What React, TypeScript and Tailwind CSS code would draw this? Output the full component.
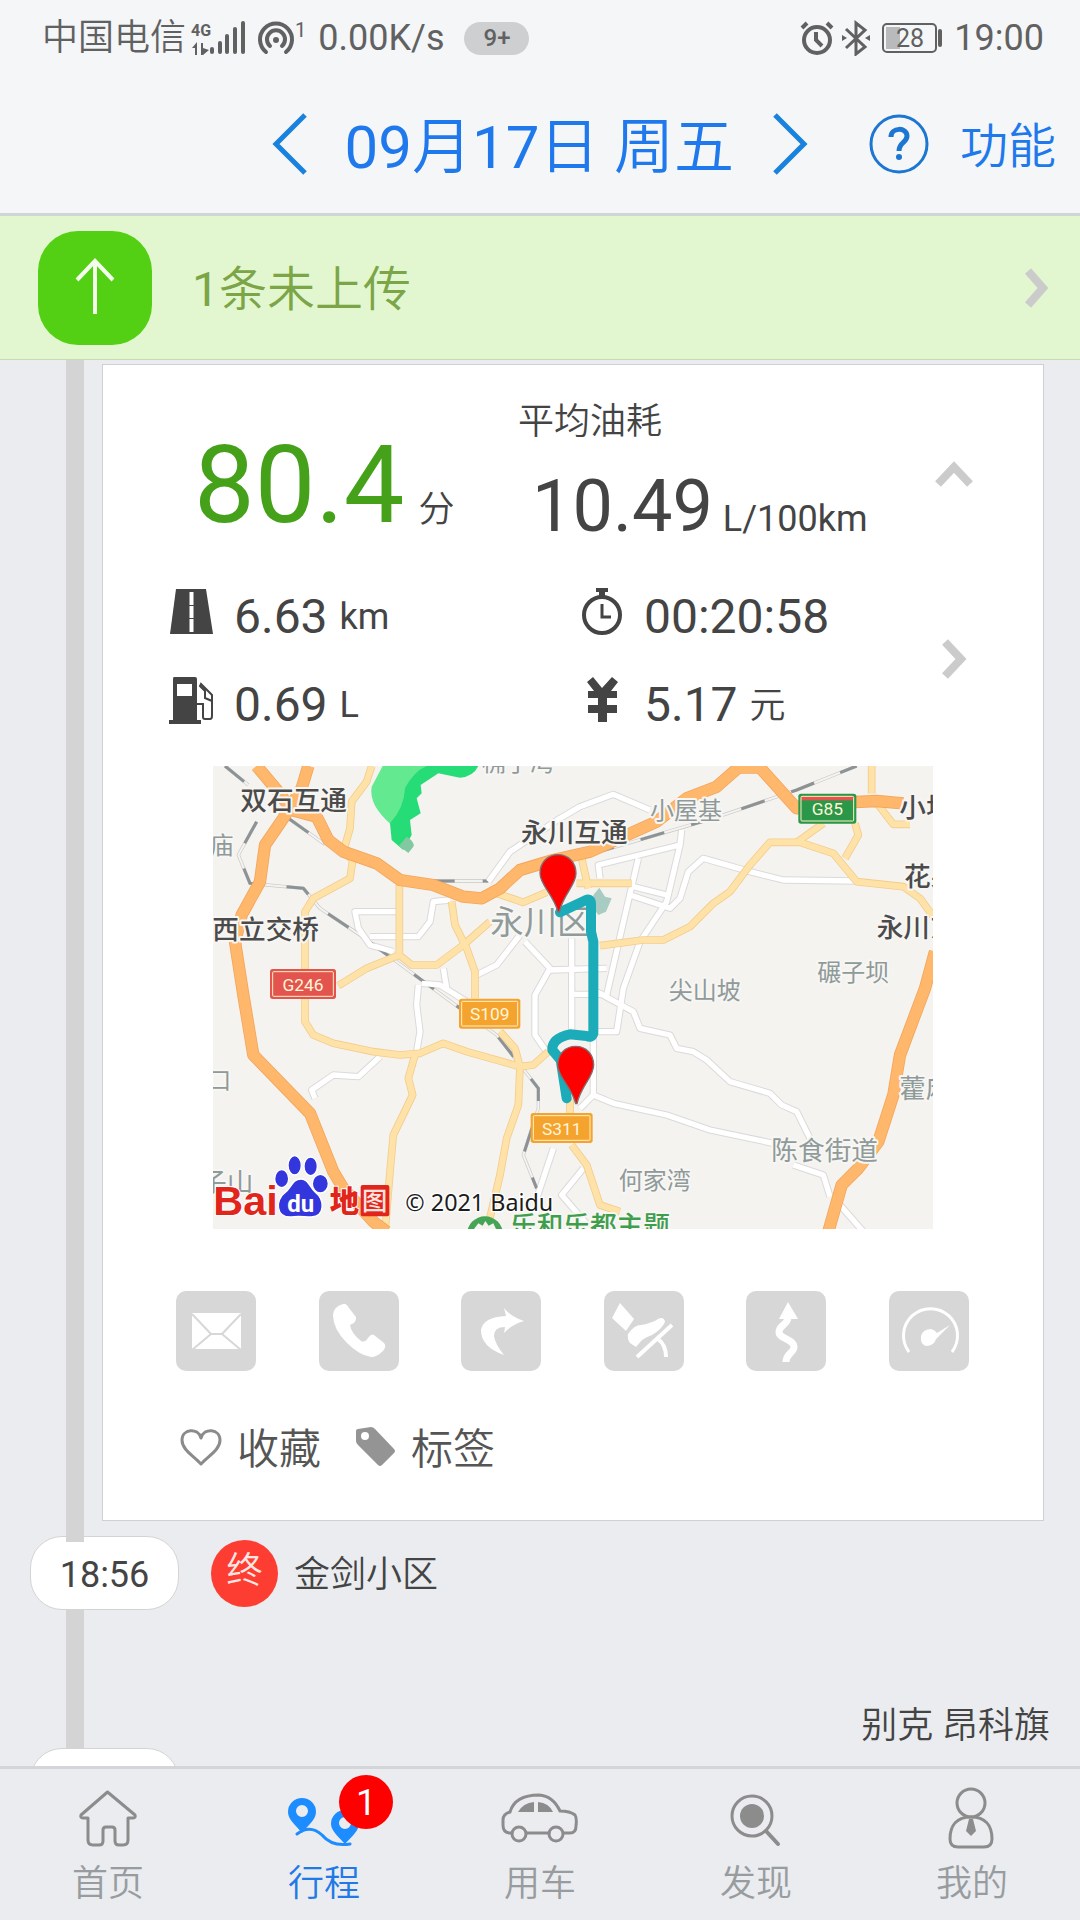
import React from 'react';

const FONT = "font-[Roboto,'Noto_Sans_CJK_SC',sans-serif]";

const ORANGE_ROADS = [
  'M170 33L235 110L275 165L350 185L385 255L430 290L530 325L600 375L700 390L790 425L845 430L900 400L960 345L1060 315L1170 290L1370 200L1460 130L1550 95L1615 38H1680L1790 160L1880 145L2030 138L2110 145',
  'M325 33L305 100L250 190L195 270L180 380L125 480L105 560L130 720L160 900L330 1075L400 1250L430 1300L520 1400L560 1430',
  'M2205 590L2175 700L2100 900L2080 1020L2035 1160L1975 1240L1925 1290L1885 1430',
];

const YELLOW_ROADS = [
  'M515 33L500 80L455 140L450 220L430 290L458 315L450 370L340 430L315 470V800L340 840L400 865L520 890L600 900L660 895L730 865L800 890L960 935L1000 930L1045 890',
  'M598 390V600L635 630H710L790 570L870 500',
  'M415 692L500 640L598 600',
  'M755 440L765 510L800 580L825 650V730',
  'M900 830L945 880L960 935L955 1050L920 1150L900 1260L860 1430',
  'M645 900L625 970L638 1020L580 1140L570 1250L555 1430',
  'M890 415L970 442L1040 412',
  'M1200 572L1330 555L1390 555L1470 515L1540 445L1590 410L1650 330L1710 262H1800L1900 295L1970 380L2110 395L2160 430L2200 485',
  'M1790 262L1870 205',
  'M1965 205L1975 240L1935 310',
  'M2015 33V115',
  'M2035 150L2080 208H2130',
  'M1145 310L1165 400',
  'M1130 385H1295',
  'M1110 1030V1080',
  'M1115 1170L1160 1230L1200 1350L1260 1370',
];

const WHITE_ROADS = [
  'M865 380L930 290L990 250L1080 190L1140 155L1240 118L1350 165',
  'M595 470H465L475 520L510 570L580 590',
  'M510 545H655L690 500L700 440L750 435',
  'M960 540L890 630L830 660',
  'M975 560L1050 640L1005 720V840L1040 890',
  'M1050 645L1220 640',
  'M1115 550V830',
  'M1110 718H1210',
  'M655 690L650 750L660 830L650 890',
  'M665 685L720 690L800 740',
  'M730 640L740 700',
  'M540 905L475 965L400 960L335 1005L345 1030',
  'M1200 370L1195 330L1440 270L1445 225',
  'M1440 270L1400 440L1320 560L1270 700L1250 830H1190',
  'M1315 310L1275 480L1220 720',
  'M1300 395L1400 420',
  'M1290 420L1410 460L1440 430L1465 350L1510 310L1650 350L1750 375L1970 378',
  'M1190 710L1300 770L1320 820L1410 840L1430 880L1480 890L1520 915L1590 980L1710 1015L1745 1050L1790 1070L1830 1150',
  'M1180 850V1020L1240 1045L1400 1080L1530 1125L1720 1165',
  'M1780 1230L1870 1260L1890 1325',
  'M1920 1350L1990 1430',
  'M1060 1180L1010 1330',
  'M1150 1240L1085 1320L1180 1430',
  'M1180 1020L1140 1060',
];

const RAILS = [
  'M75 33L145 90',
  'M170 200L115 300L150 385L310 400L360 460L480 540L590 620L780 760L890 840L1015 1000V1060L970 1200L1010 1300',
  'M265 190L375 268',
  'M690 378H865',
  'M1170 298L1540 190L1790 105L1970 33',
];

const DARK = '#4b4b4b';
const GREY = '#8f9a9a';

const PLACES = [
  { x: 121, y: 166, size: 80, color: DARK, text: '双石互通' },
  { x: 963, y: 262, size: 80, color: DARK, text: '永川互通' },
  { x: 37, y: 553, size: 80, color: DARK, text: '西立交桥' },
  { x: 2098, y: 186, size: 80, color: DARK, text: '小坝' },
  { x: 2112, y: 392, size: 80, color: DARK, text: '花果' },
  { x: 2030, y: 546, size: 80, color: DARK, text: '永川东' },
  { x: 871, y: 536, size: 100, color: GREY, text: '永川区' },
  { x: 29, y: 298, size: 72, color: GREY, text: '庙' },
  { x: 22, y: 1002, size: 72, color: GREY, text: '口' },
  { x: 0, y: 1310, size: 80, color: GREY, text: '子山' },
  { x: 845, y: 48, size: 72, color: GREY, text: '桷子湾' },
  { x: 1350, y: 192, size: 72, color: GREY, text: '小屋基' },
  { x: 1406, y: 733, size: 72, color: GREY, text: '尖山坡' },
  { x: 1852, y: 679, size: 72, color: GREY, text: '碾子坝' },
  { x: 2098, y: 1028, size: 80, color: GREY, text: '藿麻' },
  { x: 1714, y: 1214, size: 80, color: GREY, text: '陈食街道' },
  { x: 1256, y: 1302, size: 72, color: GREY, text: '何家湾' },
];

const SIGNS = [
  { x: 210, y: 642, w: 198, color: '#e3544f', text: 'G246' },
  { x: 777, y: 731, w: 184, color: '#f5a32f', text: 'S109' },
  { x: 992, y: 1074, w: 186, color: '#f5a32f', text: 'S311' },
  { x: 1795, y: 116, w: 174, color: '#2b9748', text: 'G85' },
];

const RouteMap = () => (
  <svg viewBox="39 33 2160 1389" className={`block h-auto w-full ${FONT}`} role="img" aria-label="行程地图">
    <rect x="39" y="33" width="2160" height="1389" fill="#f4f3f0" />

    {/* Parks */}
    <path d="M548 33H690Q630 90 615 170L575 210Q505 150 515 95Z" fill="#63ea90" />
    <path d="M680 33H835Q820 65 780 68L715 55L662 90L665 115L650 130L662 175L630 195L635 240L610 285L575 255L570 205Q612 160 615 100Q640 50 680 33Z" fill="#26dc77" />
    <path d="M597 272L620 245Q646 262 640 275L625 294Z" fill="#82c9a1" />
    <path d="M1180 420L1198 398L1215 425L1235 430L1218 470L1195 480L1180 460Z" fill="#a8cbc2" />

    {/* Roads */}
    <g fill="none" strokeLinejoin="round">
      <g stroke="#dadada" strokeWidth="22">
        {WHITE_ROADS.map((d) => <path key={d} d={d} />)}
      </g>
      <g stroke="#c9c9c9" strokeWidth="10">
        {RAILS.map((d) => <path key={d} d={d} />)}
      </g>
      <g stroke="#f4f3f0" strokeWidth="6">
        {RAILS.map((d) => <path key={d} d={d} />)}
      </g>
      <g stroke="#8d9294" strokeWidth="9" strokeDasharray="74 84">
        {RAILS.map((d) => <path key={d} d={d} />)}
      </g>
      <g stroke="#ffffff" strokeWidth="16">
        {WHITE_ROADS.map((d) => <path key={d} d={d} />)}
      </g>
      <g stroke="#f3cd8c" strokeWidth="23">
        {YELLOW_ROADS.map((d) => <path key={d} d={d} />)}
      </g>
      <g stroke="#ffe2a8" strokeWidth="18">
        {YELLOW_ROADS.map((d) => <path key={d} d={d} />)}
      </g>
      <g stroke="#f2a65c" strokeWidth="37">
        {ORANGE_ROADS.map((d) => <path key={d} d={d} />)}
      </g>
      <g stroke="#ffb76b" strokeWidth="32">
        {ORANGE_ROADS.map((d) => <path key={d} d={d} />)}
      </g>
    </g>

    {/* Place names */}
    <g stroke="#f7f6f3" strokeWidth="12" strokeLinejoin="round" paintOrder="stroke">
      {PLACES.map((p) => (
        <text key={p.text} x={p.x} y={p.y} fontSize={p.size} fontWeight={p.color === DARK ? 500 : 400} fill={p.color}>{p.text}</text>
      ))}
      <text x="930" y="1440" fontSize="80" fontWeight="500" fill="#3f9e4d">乐和乐都主题</text>
    </g>
    <circle cx="855" cy="1438" r="54" fill="#46a456" />
    <path d="M822 1422L835 1405L848 1412L856 1398L866 1412L880 1405L888 1422Z" fill="#f4f3f0" />

    {/* Road numbers */}
    {SIGNS.map((s) => (
      <g key={s.text}>
        <rect x={s.x} y={s.y} width={s.w} height="90" rx="8" fill={s.color} />
        {s.text === 'G85' && <rect x={s.x + 8} y={s.y + 7} width={s.w - 16} height="13" fill="#e3544f" />}
        <rect x={s.x + 8} y={s.y + 8} width={s.w - 16} height="74" rx="3" fill="none" stroke="#fff0c4" strokeWidth="3" />
        <text x={s.x + s.w / 2} y={s.y + 65} fontSize="52" textAnchor="middle" fill="#fff6d8">{s.text}</text>
      </g>
    ))}

    {/* Driven route */}
    <path d="M1080 472L1160 434Q1175 432 1173 450V530L1180 560V835Q1175 850 1160 843L1110 838Q1055 850 1057 885L1082 915L1100 1030" fill="none" stroke="#1cabb8" strokeWidth="30" strokeLinejoin="round" strokeLinecap="round" />
    {[{ x: 1074, y: 299 }, { x: 1127, y: 874 }].map((pin) => (
      <path key={pin.y} transform={`translate(${pin.x} ${pin.y})`} d="M0 0C32 0 54 24 54 56C54 92 16 118 4 172H0C-14 118 -54 92 -54 56C-54 24 -32 0 0 0Z" fill="#ff0000" stroke="#7d7070" strokeWidth="4" />
    ))}

    {/* Map provider */}
    <text x="40" y="1380" fontSize="124" fontFamily="Liberation Sans, sans-serif" fontWeight="700" fill="#e1251b" stroke="#ffffff" strokeWidth="6" paintOrder="stroke">Bai</text>
    <g fill="#3236dc" stroke="#ffffff" strokeWidth="4">
      <ellipse cx="245" cy="1271" rx="21" ry="27" />
      <ellipse cx="284" cy="1231" rx="20" ry="29" />
      <ellipse cx="332" cy="1234" rx="20" ry="28" />
      <ellipse cx="361" cy="1286" rx="24" ry="28" />
      <path d="M303 1272C325 1272 330 1298 346 1312C374 1334 376 1384 334 1386C312 1386 296 1382 274 1386C226 1388 226 1334 254 1314C274 1300 276 1272 303 1272Z" />
    </g>
    <text x="302" y="1370" fontSize="72" fontWeight="700" textAnchor="middle" fill="#ffffff">du</text>
    {/* Second character is reversed out of a red block */}
    <g fontSize="88" fontWeight="900" fill="#e1251b">
      <rect x="482" y="1290" width="86" height="94" rx="6" />
      <text x="389" y="1372" stroke="#ffffff" strokeWidth="5" paintOrder="stroke">地<tspan x="486" y="1364" fontSize="76" fontWeight="500" fill="#fbe3e0" stroke="none">图</tspan></text>
    </g>
    <text x="616" y="1368" fontSize="70" fontFamily="Noto Sans, sans-serif" fill="#1c1c1c" stroke="#ffffff" strokeWidth="8" paintOrder="stroke">© 2021 Baidu</text>
  </svg>
);

const StatusBar = () => (
  <div className="flex h-[74px] items-center justify-between pt-0.5 pr-9 pl-[42px] text-4xl leading-9 text-[#616161]">
    <div className="flex items-center">
      <span className="font-[350]">中国电信</span>
      <svg width="56" height="36" viewBox="190 18 56 36" className="ml-1" fill="currentColor" aria-hidden="true">
        <text x="191" y="34" fontSize="16" fontWeight="700">4G</text>
        <path d="M192 46L197 40V53H195V46ZM201 41H203V46L209 48L203 53H201Z" />
        <rect x="210" y="45" width="4" height="7" rx="2" />
        <rect x="218" y="39" width="4" height="13" rx="2" />
        <rect x="225" y="32" width="4" height="20" rx="2" />
        <rect x="233" y="25" width="4" height="27" rx="2" />
        <rect x="241" y="19" width="4" height="33" rx="2" />
      </svg>
      <svg width="38" height="36" viewBox="0 0 38 36" className="ml-[11px]" fill="none" stroke="currentColor" strokeWidth="4" strokeLinecap="round" aria-hidden="true">
        <path d="M9 32A16 16 0 1 1 29 32" />
        <path d="M13 26A9 9 0 1 1 25 26" />
        <circle cx="19" cy="20" r="3" fill="currentColor" stroke="none" />
      </svg>
      <span className="self-start text-xl leading-5">1</span>
      <span className="ml-3">0.00K/s</span>
      <span className="ml-5 rounded-full bg-[#cdcfd1] px-[19px] text-2xl leading-[33px] font-medium">9+</span>
    </div>
    <div className="flex items-center">
      <svg width="34" height="36" viewBox="0 0 34 36" fill="none" stroke="currentColor" strokeWidth="4" aria-hidden="true">
        <circle cx="17" cy="20" r="13" />
        <path d="M16 12V20L22 26M2 8L7 3M32 8L27 3" />
      </svg>
      <svg width="28" height="36" viewBox="0 0 28 36" className="ml-2" fill="none" stroke="currentColor" strokeWidth="3" aria-hidden="true">
        <path d="M4 9L23 27L14 34V3L23 10L4 28" />
        <path d="M0 15L5 18L0 21ZM28 15L23 18L28 21Z" fill="currentColor" stroke="none" />
      </svg>
      <svg width="62" height="32" viewBox="0 0 62 32" className="ml-3" aria-label="电量 28%">
        <rect x="1" y="2" width="53" height="28" rx="4" fill="none" stroke="currentColor" strokeWidth="2" />
        <rect x="4" y="5" width="14" height="22" fill="#b9babb" />
        <rect x="56" y="7" width="4" height="18" rx="2" fill="currentColor" />
        <text x="28" y="25" fontSize="25" textAnchor="middle" fill="currentColor">28</text>
      </svg>
      <span className="ml-2.5">19:00</span>
    </div>
  </div>
);

type ChevronProps = { d: string; width: number; height: number; className?: string; stroke?: number };

const Chevron = ({ d, width, height, className = 'text-[#cbcbcb]', stroke = 8 }: ChevronProps) => (
  <svg width={width} height={height} viewBox={`0 0 ${width} ${height}`} className={className} fill="none" stroke="currentColor" strokeWidth={stroke} aria-hidden="true">
    <path d={d} />
  </svg>
);

const Header = () => (
  <header className="flex h-[142px] items-center justify-end border-b-[3px] border-[#d0d5d8] pr-6 text-[#2079ec]">
    <button type="button" aria-label="前一天">
      <Chevron d="M33 2L4 31L33 60" width={36} height={62} stroke={5} className="text-[#1a82dc]" />
    </button>
    <h1 className="mr-[38px] ml-9 pt-2 text-6xl leading-[60px]">
      09<span className="font-[350]">月</span>17<span className="font-[350]">日 周五</span>
    </h1>
    <button type="button" aria-label="后一天">
      <Chevron d="M3 2L32 31L3 60" width={36} height={62} stroke={5} className="text-[#1a82dc]" />
    </button>
    <button type="button" aria-label="帮助" className="mr-[31px] ml-[61px]">
      <svg width="60" height="60" viewBox="0 0 60 60" fill="none" stroke="#1c76d2" aria-hidden="true">
        <circle cx="30" cy="30" r="28" strokeWidth="3" />
        <path d="M22 23C22 13 38 13 38 22C38 29 30 28 30 37" strokeWidth="5" />
        <circle cx="30" cy="43" r="3" fill="#1c76d2" stroke="none" />
      </svg>
    </button>
    <button type="button" className="pt-1.5 text-5xl leading-[48px] font-[350]">功能</button>
  </header>
);

const UploadBanner = () => (
  <button type="button" className="flex h-36 w-full items-center border-b border-[#c5dcb4] bg-[#e2f7cf] pr-7 pl-[38px] text-[#7ba547]">
    <span className="flex size-[114px] items-center justify-center rounded-[40px] bg-[#53d014]">
      <svg width="40" height="56" viewBox="0 0 40 56" className="mb-1" fill="none" stroke="#f4fcee" strokeWidth="4" aria-hidden="true">
        <path d="M20 3V56M2 22L20 3L38 22" />
      </svg>
    </span>
    <span className="ml-10 pt-1 text-5xl leading-[48px]">1<span className="font-[350]">条未上传</span></span>
    <span className="ml-auto">
      <Chevron d="M4 3L19 20L4 37" width={28} height={40} />
    </span>
  </button>
);

const STATS = [
  {
    label: '里程',
    value: '6.63',
    unit: 'km',
    icon: (
      <>
        <path d="M8 1H38L45 46H2Z" />
        <path d="M23.500 4V17M23.500 18V30M23.500 31V44" stroke="#fff" strokeWidth="4" />
      </>
    ),
  },
  {
    label: '时长',
    value: '00:20:58',
    unit: '',
    icon: (
      <>
        <circle cx="24" cy="27" r="18" fill="none" stroke="currentColor" strokeWidth="4" />
        <path d="M18 0H30V4H27V9H21V4H18Z" />
        <path d="M24 16V29H33" fill="none" stroke="currentColor" strokeWidth="3" />
      </>
    ),
  },
  {
    label: '油量',
    value: '0.69',
    unit: 'L',
    icon: (
      <>
        <path fillRule="evenodd" d="M6 1H27Q29 1 29 3V44H33V48H1V44H5V3Q5 1 6 1ZM9 8V20H24V8Z" />
        <path d="M29 28H35V41Q35 43 37 43H42Q44 43 44 40V19L33 8L32 10L37 15V22L44 25" fill="none" stroke="currentColor" strokeWidth="2" />
      </>
    ),
  },
  {
    label: '费用',
    value: '5.17',
    unit: '元',
    icon: <path d="M9 6L15 1L24 12L34 1L40 6L33 15H39V22H29V29H39V37H29V46H20V37H10V29H20V22H10V15H16Z" />,
  },
];

const TOOLS = [
  {
    name: '消息',
    icon: (
      <>
        <rect x="16" y="22" width="49" height="36" fill="#fff" />
        <path d="M16 23L35 43H46L65 23M16 59L35 43M65 59L46 43" fill="none" stroke="#d7d7d7" strokeWidth="2" />
      </>
    ),
  },
  {
    name: '电话',
    icon: <path d="M24 13Q27 12 30 17L37 26Q38 31 31 34Q32 42 42 50Q46 52 49 47Q52 42 55 44L65 52Q68 55 64 60Q58 66 52 66Q40 64 28 52Q14 38 14 24Q14 16 24 13Z" fill="#fff" />,
  },
  {
    name: '转弯',
    icon: <path d="M43 17Q50 26 63 30Q50 34 43 42L44 36Q33 36 33 45Q34 53 43 64Q20 56 20 39Q22 26 45 25Z" fill="#fff" />,
  },
  {
    name: '刹车',
    icon: (
      <>
        <path d="M16 12L30 28L22 40L8 27Z" fill="#fff" />
        <path d="M24 43Q30 34 37 34Q48 32 54 28Q60 25 61 31Q58 38 48 44Q42 46 38 49L32 56L26 52Q23 48 24 43Z" fill="#fff" />
        <path d="M68 34L33 66M54 48Q62 54 62 66" fill="none" stroke="#fff" strokeWidth="4" />
      </>
    ),
  },
  {
    name: '路线',
    icon: (
      <>
        <path d="M42 11L52 28H33Z" fill="#fff" />
        <path d="M42 26C42 34 33 34 33 41C33 48 48 48 48 56C48 62 40 62 40 71" fill="none" stroke="#fff" strokeWidth="7" />
      </>
    ),
  },
  {
    name: '车速',
    icon: (
      <>
        <path d="M20 61A27 27 0 1 1 63 61" fill="none" stroke="#fff" strokeWidth="3" />
        <path d="M61 34L47 48Q45 55 37 55Q31 53 32 45Q34 38 42 38Q46 39 48 42Z" fill="#fff" />
      </>
    ),
  },
];

const TripCard = () => (
  <article className="mr-9 ml-[102px] border border-[#cdd0d6] bg-white pt-[39px] pr-[70px] pb-[46px] pl-[65px] text-[#444444]">
    <div className="flex items-end">
      <p className="flex w-[350px] items-baseline pb-1 pl-[26px]">
        <span className="text-[108px] leading-[108px] text-[#46a11a]">80.4</span>
        <span className="ml-3.5 text-4xl leading-9 font-[350]">分</span>
      </p>
      <div>
        <p className="text-4xl leading-9 font-[350]">平均油耗</p>
        <p className="mt-[31px] flex items-baseline pl-3.5">
          <span className="text-7xl leading-[72px]">10.49</span>
          <span className="ml-2.5 text-4xl leading-9">L/100km</span>
        </p>
      </div>
      <button type="button" aria-label="收起" className="ml-auto self-center">
        <Chevron d="M3 24L19 7L35 24" width={38} height={28} />
      </button>
    </div>

    <div className="mt-[50px] flex items-center justify-between">
      <ul className="grid grid-cols-[410px_auto] gap-y-10">
        {STATS.map((s) => (
          <li key={s.label} className="flex h-12 items-center gap-3">
            <svg width="48" height="48" viewBox="0 0 48 48" className="mr-1.5 -mt-2.5" fill="currentColor" role="img" aria-label={s.label}>
              {s.icon}
            </svg>
            <span className="text-5xl leading-[48px]">{s.value}</span>
            {s.unit && <span className={s.unit === '元' ? 'pt-0.5 text-4xl leading-9 font-[350]' : 'text-4xl leading-9'}>{s.unit}</span>}
          </li>
        ))}
      </ul>
      <button type="button" aria-label="行程详情" className="mb-1 flex w-[38px] justify-center">
        <Chevron d="M4 3L20 20L4 37" width={26} height={40} />
      </button>
    </div>

    <div className="mt-[37px] mr-10 ml-[45px]">
      <RouteMap />
    </div>

    <div className="mt-[62px] mr-1 ml-2 flex justify-between">
      {TOOLS.map((t) => (
        <button key={t.name} type="button" aria-label={t.name} className="size-20 rounded-[10px] bg-[#d7d7d7]">
          <svg viewBox="0 0 80 80" aria-hidden="true">{t.icon}</svg>
        </button>
      ))}
    </div>

    <div className="mt-[55px] ml-3 flex gap-[35px] text-[42px] leading-[48px] font-[350] text-[#555555]">
      <button type="button" className="flex items-center gap-[15px]">
        <svg width="42" height="38" viewBox="0 0 42 38" className="-mt-1.5" fill="none" stroke="#8b8b8b" strokeWidth="3" strokeLinejoin="round" aria-hidden="true">
          <path d="M21 36C14 28 2 22 2 12C2 1 18 -1 21 10C24 -1 40 1 40 12C40 22 28 28 21 36Z" />
        </svg>
        收藏
      </button>
      <button type="button" className="flex items-center gap-[15px]">
        <svg width="40" height="40" viewBox="0 0 40 40" className="-mt-1.5" fill="#949494" aria-hidden="true">
          <path fillRule="evenodd" d="M2 2L15 0Q17 0 19 2L38 22Q40 24 38 26L26 38Q24 40 22 38L2 18Q0 16 0 14V4Q0 2 2 2ZM9 5A4 4 0 1 0 9 13A4 4 0 1 0 9 5Z" />
        </svg>
        标签
      </button>
    </div>
  </article>
);

const Timeline = () => (
  <main className="relative min-h-0 flex-1 overflow-hidden pt-1 text-4xl leading-9 text-[#444444]">
    <div className="absolute inset-y-0 left-[66px] w-[18px] bg-[#d4d4d4]" />
    <div className="relative">
      <TripCard />
      <div className="mt-[15px] ml-[30px] flex items-center">
        <time className="relative flex h-[74px] w-[149px] items-center justify-center rounded-[32px] border border-[#d4d4d4] bg-white pt-1">
          <span className="absolute -top-px left-[35px] h-[6px] w-[18px] bg-[#d4d4d4]" />
          18:56
        </time>
        <span className="ml-8 flex size-[67px] items-center justify-center rounded-full bg-[#fd3c32] pb-1 font-[350] text-[#ffe6e2]">终</span>
        <span className="ml-4 pt-1 font-[350]">金剑小区</span>
      </div>
      <p className="mt-[98px] pr-[30px] text-right font-[350]">别克 昂科旗</p>
      <div className="mt-1 ml-[30px] h-[74px] w-[149px] rounded-[32px] border border-[#d4d4d4] bg-white" />
    </div>
  </main>
);

const TABS = [
  {
    name: '首页',
    width: 64,
    icon: <path d="M31.500 5L5 28Q4 31 7 31H12V53Q12 58 17 58H23Q27 58 27 54V43Q27 40 30 40H36Q39 40 39 43V54Q39 58 43 58H47Q52 58 52 53V31H57Q60 31 59 28Z" />,
  },
  {
    name: '行程',
    width: 80,
    badge: 1,
    icon: (
      <>
        <path fillRule="evenodd" stroke="none" fill="#1d8cff" d="M18 11A14 14 0 0 1 32 25C32 33 24 38 18 46C12 38 4 33 4 25A14 14 0 0 1 18 11ZM18 18A6 6 0 1 0 18 30A6 6 0 1 0 18 18Z" />
        <path fillRule="evenodd" stroke="none" fill="#1d8cff" d="M61 23A14 14 0 0 1 75 37C75 44 67 50 61 57C55 50 47 44 47 37A14 14 0 0 1 61 23ZM61 30A6 6 0 1 0 61 42A6 6 0 1 0 61 30Z" />
        <path stroke="#1d8cff" d="M13 47Q26 37 38 48Q48 60 66 57" />
      </>
    ),
  },
  {
    name: '用车',
    width: 80,
    icon: (
      <>
        <path d="M12 46H9Q3 45 3 38V33Q3 27 10 25Q15 8 39 8Q53 9 60 24Q70 24 75 28Q77 31 76 39Q76 46 70 46H64M27 46H49" />
        <circle cx="19" cy="47" r="7" />
        <circle cx="56" cy="47" r="7" />
        <path d="M18 25Q23 16 34 15V25ZM38 15Q49 16 53 25H38Z" fill="#8c8c8c" stroke="none" />
      </>
    ),
  },
  {
    name: '发现',
    width: 64,
    icon: (
      <>
        <circle cx="28" cy="29" r="20" />
        <circle cx="28" cy="29" r="12" fill="#8c8c8c" stroke="none" />
        <path d="M42 44L54 57" strokeWidth="4" />
      </>
    ),
  },
  {
    name: '我的',
    width: 64,
    icon: (
      <>
        <circle cx="31" cy="16" r="14" />
        <path d="M31 30C17 30 10 38 10 52Q10 60 18 60H44Q52 60 52 52C52 38 45 30 31 30Z" />
        <path d="M29 32H33L36 44L31 49L26 44Z" fill="#8c8c8c" stroke="none" />
      </>
    ),
  },
];

const TabBar = () => (
  <nav className="grid grid-cols-5 border-t-[3px] border-[#d3d5d8] text-4xl leading-9 font-[350] text-[#989c9f]">
    {TABS.map((tab) => (
      <a key={tab.name} href="#" className={tab.badge ? 'relative flex flex-col items-center py-[18px] text-[#2079e6]' : 'flex flex-col items-center py-[18px]'}>
        <svg width={tab.width} height="64" viewBox={`0 0 ${tab.width} 64`} fill="none" stroke="#8c8c8c" strokeWidth="3" strokeLinejoin="round" strokeLinecap="round" aria-hidden="true">
          {tab.icon}
        </svg>
        <span className="mt-[15px]">{tab.name}</span>
        {tab.badge && (
          <span className="absolute top-1.5 left-1/2 ml-[15px] flex size-[54px] items-center justify-center rounded-full bg-[#ff0000] pt-0.5 font-normal text-white">{tab.badge}</span>
        )}
      </a>
    ))}
  </nav>
);

const App: React.FC = () => {
  return (
    <div lang="zh-CN" className={`flex h-screen flex-col bg-[#eaecf0] ${FONT}`}>
      <div className="bg-[#f4f6f8]">
        <StatusBar />
        <Header />
      </div>
      <UploadBanner />
      <Timeline />
      <TabBar />
    </div>
  );
};

export default App;
